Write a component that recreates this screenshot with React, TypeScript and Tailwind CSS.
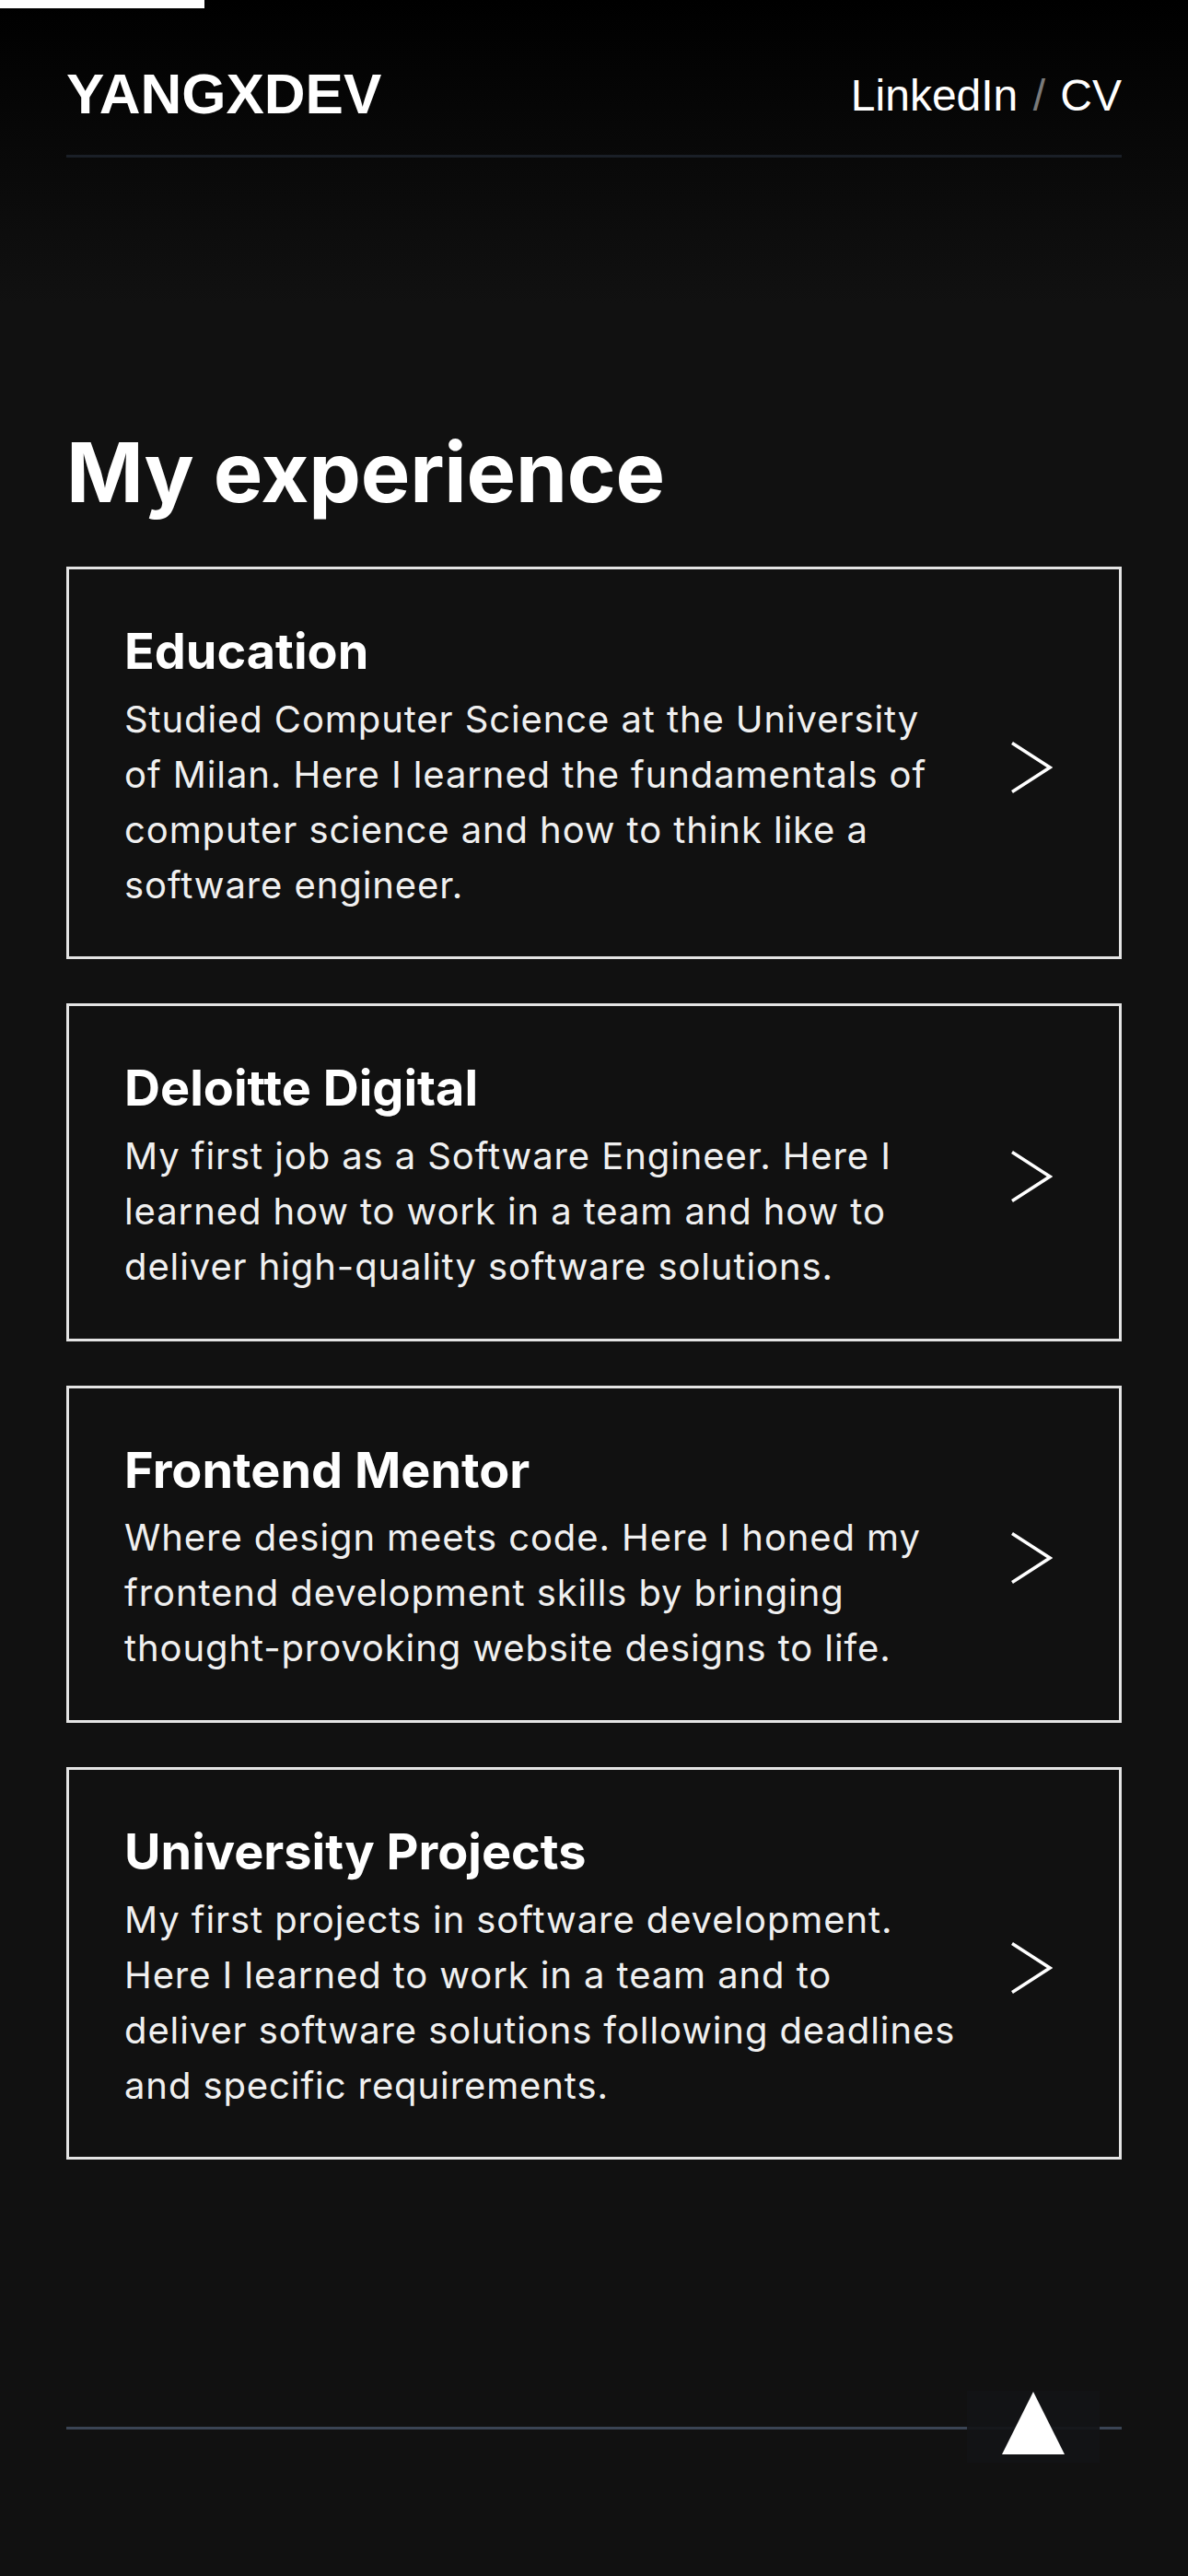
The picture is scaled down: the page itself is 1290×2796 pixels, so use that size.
import React from "react";

const items = [
  {
    title: "Education",
    text: "Studied Computer Science at the University of Milan. Here I learned the fundamentals of computer science and how to think like a software engineer.",
  },
  {
    title: "Deloitte Digital",
    text: "My first job as a Software Engineer. Here I learned how to work in a team and how to deliver high-quality software solutions.",
  },
  {
    title: "Frontend Mentor",
    text: "Where design meets code. Here I honed my frontend development skills by bringing thought-provoking website designs to life.",
  },
  {
    title: "University Projects",
    text: "My first projects in software development. Here I learned to work in a team and to deliver software solutions following deadlines and specific requirements.",
  },
];

function Chevron() {
  return (
    <svg width="46" height="56" viewBox="0 0 46 56" fill="none" className="shrink-0">
      <polyline points="2,1.5 43,28 2,54.5" stroke="#ffffff" strokeWidth="3.5" strokeLinejoin="miter" fill="none" />
    </svg>
  );
}

export default function App() {
  return (
    <div className="relative min-h-[2796px] w-full bg-[#111111] bg-[linear-gradient(180deg,#000000_0px,#111111_330px)] px-[72px] font-['Inter',sans-serif] text-white">
      <div className="absolute left-0 top-0 h-[9px] w-[222px] bg-white" />

      <header className="flex items-center justify-between border-b-[3px] border-[#1a1f27] pb-[36px] pt-[72px]">
        <div className="h-[60px] font-['Liberation_Sans',Arial,sans-serif] text-[62px] font-bold leading-[60px] text-white">
          YANGXDEV
        </div>
        <div className="mt-[4px] font-['Liberation_Sans',Arial,sans-serif] text-[48px] font-normal leading-[48px] text-white">
          LinkedIn <span className="px-[3px] text-[#7a7a7a]">/</span> CV
        </div>
      </header>

      <h1 className="mt-[297px] text-[90px] font-bold leading-[90px] tracking-[-0.2px] text-white">
        My experience
      </h1>

      <div className="mt-[57px] flex flex-col gap-[48px]">
        {items.map((it) => (
          <div
            key={it.title}
            className="flex items-center justify-between border-[3px] border-[#e4e4e4] bg-[#111111] pb-[47.5px] pl-[60px] pr-[72px] pt-[57px]"
          >
            <div className="w-[905px]">
              <h2 className="text-[54px] font-bold leading-[64.8px] text-white">{it.title}</h2>
              <p className="mt-[11px] text-[40px] font-normal leading-[60px] tracking-[0.9px] text-[#f0f0f0]">{it.text}</p>
            </div>
            <Chevron />
          </div>
        ))}
      </div>

      <footer className="relative mt-[290px]">
        <div className="h-[3px] w-full bg-[#3a4454]" />
        <div className="absolute right-[24px] top-[-39px] flex h-[78px] w-[144px] justify-center bg-[#131416]/90 pt-[1px]">
          <svg width="68" height="68" viewBox="0 0 68 68">
            <polygon points="34,0 68,68 0,68" fill="#ffffff" />
          </svg>
        </div>
      </footer>
    </div>
  );
}
